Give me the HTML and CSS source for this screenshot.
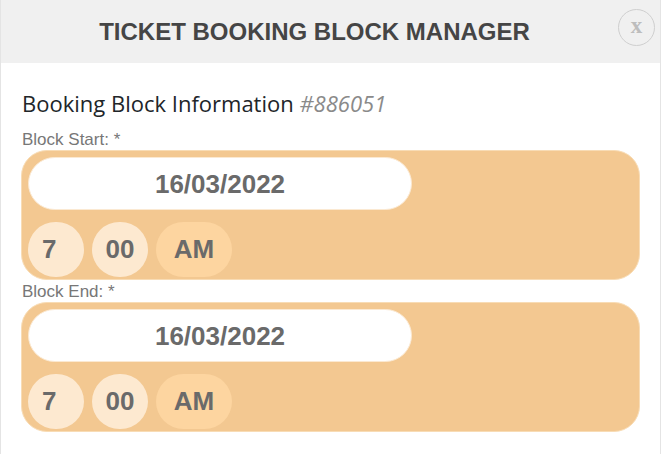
FILE: index.html
```html
<!DOCTYPE html>
<html lang="en">
<head>
  <meta charset="UTF-8">
  <meta name="viewport" content="width=device-width, initial-scale=1.0">
  <title>Ticket Booking Block Manager</title>
  <link rel="stylesheet" href="styles.css">
</head>
<body>
  <div class="modal">
    <!-- header bar -->
    <div class="modal-head">
      <h1 class="modal-title">TICKET BOOKING BLOCK MANAGER</h1>
      <button class="close-btn">x</button>
    </div>

    <div class="modal-body">
      <h2 class="info-title">Booking Block Information <span class="block-id">#886051</span></h2>

      <label class="field-label">Block Start: *</label>
      <div class="datetime">
        <div class="date-pill">16/03/2022</div>
        <div class="time-row">
          <span class="time-bubble">7</span>
          <span class="time-bubble">00</span>
          <span class="time-bubble ampm">AM</span>
        </div>
      </div>

      <label class="field-label">Block End: *</label>
      <div class="datetime">
        <div class="date-pill">16/03/2022</div>
        <div class="time-row">
          <span class="time-bubble">7</span>
          <span class="time-bubble">00</span>
          <span class="time-bubble ampm">AM</span>
        </div>
      </div>
    </div>
  </div>
</body>
</html>
```

FILE: styles.css
```css
/* --- base --- */
body {
  margin: 0;
  background: #fff;
  font-family: "Liberation Sans", Arial, sans-serif;
}
.modal {
  min-height: 454px;
  border-left: 1px solid #e4e4e4;
  border-right: 1px solid #e4e4e4;
  box-sizing: border-box;
}
/* --- header --- */
.modal-head {
  height: 63px;
  background-color: #f0f0f0;
  display: flex;
  align-items: center;
  padding-right: 5px;
}
.modal-title {
  flex: 1;
  margin: 0 0 0 10px;
  text-align: center;
  font-size: 24px;
  font-weight: bold;
  color: #454545;
}
.close-btn {
  width: 37px;
  height: 37px;
  margin-top: -9px;
  padding: 0 0 3px;
  border: 1px solid #cfcfcf;
  border-radius: 50%;
  background: transparent;
  font-family: "Liberation Serif", serif;
  font-size: 23px;
  font-weight: bold;
  color: #bdbdbd;
  line-height: 1;
}
/* --- body --- */
.modal-body {
  padding: 25px 20px 20px 20px;
}
.info-title {
  margin: 0 0 13px 1px;
  font-family: "Open Sans", sans-serif;
  font-size: 22px;
  font-weight: normal;
  color: #212529;
}
.block-id {
  font-style: italic;
  color: #8a8a8a;
}
.field-label {
  display: block;
  font-size: 17px;
  color: #777;
  margin: 0 0 1px 1px;
  line-height: 18px;
}
/* --- date / time block --- */
.datetime {
  background-color: #f3c891;
  border: 1px solid #f8dcb5;
  border-radius: 26px;
  padding: 6px 6px 2px;
  margin-bottom: 3px;
}
.date-pill {
  width: 384px;
  height: 53px;
  line-height: 53px;
  background: #fff;
  border: 1px solid #fbe9d2;
  box-sizing: border-box;
  border-radius: 27px;
  text-align: center;
  font-size: 26px;
  font-weight: bold;
  color: #6a6a6a;
}
.time-row {
  display: flex;
  gap: 8px;
  margin-top: 12px;
}
.time-bubble {
  min-width: 56px;
  height: 55px;
  line-height: 55px;
  padding: 0 10px;
  box-sizing: border-box;
  border-radius: 28px;
  background-color: #fde9d0;
  font-size: 26px;
  font-weight: bold;
  color: #6a6a6a;
  text-align: center;
}
.time-bubble:first-child {
  text-align: left;
  padding-left: 14px;
}
.time-bubble.ampm {
  min-width: 76px;
  background-color: #fdd5a0;
}
```
